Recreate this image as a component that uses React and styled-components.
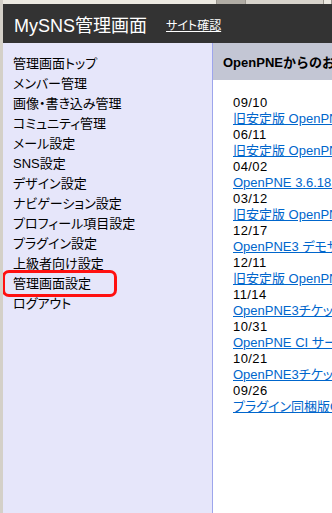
import styled, { createGlobalStyle } from "styled-components";

const GlobalStyle = createGlobalStyle`
  html, body {
    margin: 0;
    padding: 0;
    background: #d4d0c8;
  }
  body {
    font-family: "Liberation Sans", "Noto Sans CJK JP", sans-serif;
    font-size: 13px;
    color: #000;
  }
`

const Frame = styled.div`
  display: flex;
  flex-direction: column;
  height: 513px;
  overflow: hidden;
  border-left: 3px solid #d4d0c8;
  box-shadow: inset 1px 0 0 #a8a49c;
`

const TopStrip = styled.div`
  height: 4px;
  display: flex;
  background: #ece9e1;
`

const StripPart = styled.div`
  width: ${props => props.w}px;
  background: ${props => props.bg};
  border-right: 1px solid #9a968e;
  flex: ${props => (props.w ? "none" : "1")};
`

const Header = styled.div`
  height: 39px;
  background: #333333;
  display: flex;
  align-items: center;
  padding-left: 11px;
  gap: 19px;
`

const Title = styled.h1`
  margin: 0;
  color: #fff;
  font-size: 18px;
  font-weight: normal;
`

const SiteLink = styled.a`
  color: #fff;
  font-size: 12px;
  text-decoration: underline;
  margin-top: 2px;
  font-feature-settings: "palt";
`

const Body = styled.div`
  flex: 1;
  display: flex;
  background: #fff;
`

const Sidebar = styled.ul`
  width: 209px;
  flex: none;
  margin: 0;
  padding: 11px 0 0 0;
  list-style: none;
  background: #e6e6fa;
  border-right: 1px solid #9da5ec;
`

const NavItem = styled.li`
  position: relative;
  line-height: 20px;
  padding-left: 10px;
  font-size: 13px;
  white-space: nowrap;
  font-feature-settings: "palt";
`

const Highlight = styled.span`
  position: absolute;
  left: -1px;
  top: -4px;
  width: 109px;
  height: 21px;
  border: 3px solid #ff1010;
  border-radius: 7px;
`

const Main = styled.div`
  flex: 1;
  min-width: 0;
  overflow: hidden;
`

const MainHead = styled.h2`
  margin: 0;
  height: 37px;
  display: flex;
  align-items: center;
  padding-left: 10px;
  background: #c3c6d4;
  font-size: 13px;
  font-weight: bold;
  white-space: nowrap;
`

const News = styled.dl`
  margin: 0;
  padding: 15px 0 0 20px;
  line-height: 16px;
  white-space: nowrap;
`

const NewsDate = styled.dt`
  font-size: 13px;
  letter-spacing: 0.4px;
`

const NewsLink = styled.dd`
  margin: 0;
  font-size: 13px;
  font-feature-settings: "palt";
  a {
    color: #0066cc;
    text-decoration: underline;
  }
`

const navItems = [
  "管理画面トップ",
  "メンバー管理",
  "画像・書き込み管理",
  "コミュニティ管理",
  "メール設定",
  "SNS設定",
  "デザイン設定",
  "ナビゲーション設定",
  "プロフィール項目設定",
  "プラグイン設定",
  "上級者向け設定",
  "管理画面設定",
  "ログアウト",
]

const news = [
  ["09/10", "旧安定版 OpenPNE 3.4.21 リリースのお知らせ"],
  ["06/11", "旧安定版 OpenPNE 3.4.20 リリースのお知らせ"],
  ["04/02", "OpenPNE 3.6.18、3.4.19 リリースのお知らせ"],
  ["03/12", "旧安定版 OpenPNE 3.4.18 リリースのお知らせ"],
  ["12/17", "OpenPNE3 デモサイトのお知らせ"],
  ["12/11", "旧安定版 OpenPNE 3.4.17 リリースのお知らせ"],
  ["11/14", "OpenPNE3チケット管理システムのお知らせ"],
  ["10/31", "OpenPNE CI サーバーのお知らせ"],
  ["10/21", "OpenPNE3チケット管理システムのお知らせ"],
  ["09/26", "プラグイン同梱版OpenPNEのお知らせ"],
]

export default function App() {
  return (
    <>
      <GlobalStyle />
      <Frame>
        <TopStrip>
          <StripPart w={213} bg="#ece9e1" />
          <StripPart w={28} bg="#b0aca4" />
          <StripPart w={77} bg="#d8d4cc" />
          <StripPart bg="#ece9e1" />
        </TopStrip>
        <Header>
          <Title>MySNS管理画面</Title>
          <SiteLink href="#">サイト確認</SiteLink>
        </Header>
        <Body>
          <Sidebar>
            {navItems.map(item => (
              <NavItem key={item}>
                {item}
                {item === "管理画面設定" && <Highlight />}
              </NavItem>
            ))}
          </Sidebar>
          <Main>
            <MainHead>OpenPNEからのお知らせ</MainHead>
            <News>
              {news.map(([date, title]) => (
                <div key={date + title}>
                  <NewsDate>{date}</NewsDate>
                  <NewsLink><a href="#">{title}</a></NewsLink>
                </div>
              ))}
            </News>
          </Main>
        </Body>
      </Frame>
    </>
  )
}
